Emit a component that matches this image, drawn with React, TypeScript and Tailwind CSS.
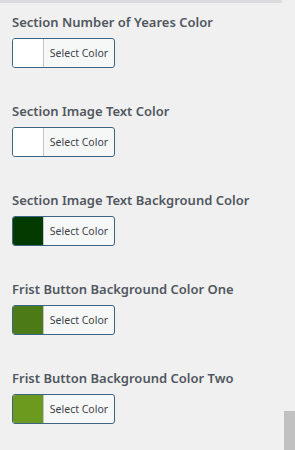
import React from "react";

const fields = [
  { label: "Section Number of Yeares Color", color: "#ffffff" },
  { label: "Section Image Text Color", color: "#ffffff" },
  { label: "Section Image Text Background Color", color: "#033a00" },
  { label: "Frist Button Background Color One", color: "#4b7a17" },
  { label: "Frist Button Background Color Two", color: "#6b9a1f" },
];

const ColorField = ({ label, color }: { label: string; color: string }) => (
  <div className="mb-[33px]">
    <div className="h-[20px] leading-[20px] text-[13px] font-semibold text-[#50575e] whitespace-nowrap">
      {label}
    </div>
    <button className="mt-[6px] flex h-[30px] w-[103px] overflow-hidden rounded-[3px] border border-[#3b6582] bg-[#f6f7f7]">
      <span className="h-full w-[31px] border-r border-[#c3c4c7]" style={{ backgroundColor: color }} />
      <span className="flex-1 text-center text-[10.5px] leading-[28px] text-[#3c434a]">Select Color</span>
    </button>
  </div>
);

export default function App() {
  return (
    <div
      className="relative h-[450px] w-[295px] overflow-hidden bg-[#f0f0f1]"
      style={{ fontFamily: '"Noto Sans", "Open Sans", sans-serif' }}
    >
      <div className="h-[3px] w-[282px] bg-[#dcdcde]" />
      <div className="px-3 pt-[9px]">
        {fields.map((f) => (
          <ColorField key={f.label} {...f} />
        ))}
      </div>
      <div className="absolute right-0 top-[411px] h-[39px] w-[11px] bg-[#c1c1c1]" />
    </div>
  );
}
